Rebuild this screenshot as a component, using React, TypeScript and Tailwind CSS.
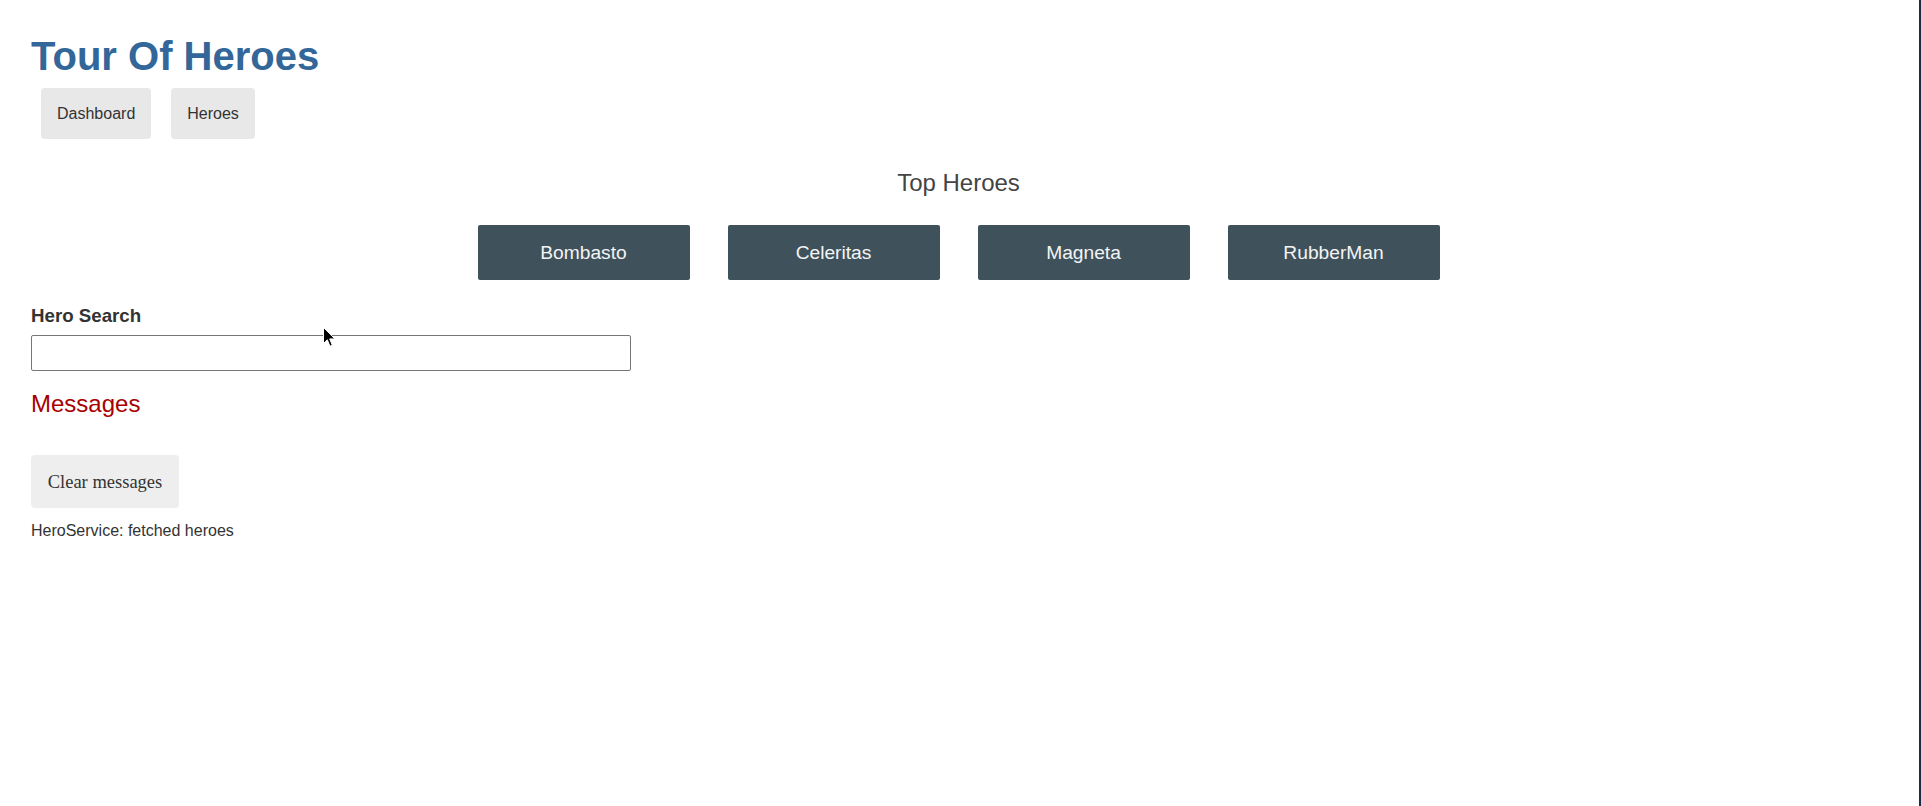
import React from "react";

const heroes = ["Bombasto", "Celeritas", "Magneta", "RubberMan"];

export default function App() {
  return (
    <div className="relative flex min-h-[806px] w-full bg-white">
      <main className="flex-1 pl-[31px] pr-[33px] pt-[33px] font-['Liberation_Sans',Arial,sans-serif] text-[#333]">
        <h1 className="text-[40px] font-bold leading-[46px] text-[#336699]">Tour Of Heroes</h1>
        <nav className="ml-[10px] mt-[9px] flex gap-5">
          <a className="block rounded-[4px] bg-[#e8e8e8] px-4 py-4 text-[16px] leading-[19px] text-[#333]">Dashboard</a>
          <a className="block rounded-[4px] bg-[#e8e8e8] px-4 py-4 text-[16px] leading-[19px] text-[#333]">Heroes</a>
        </nav>

        <h2 className="mt-[30px] text-center text-[24px] font-normal leading-[28px] text-[#444]">Top Heroes</h2>
        <div className="mx-auto mt-[28px] flex max-w-[1000px] justify-around">
          {heroes.map((h) => (
            <a
              key={h}
              className="flex h-[55px] w-[212px] items-center justify-center rounded-[2px] bg-[#3f525c] pt-[1px] text-[19.2px] leading-[22px] text-[#f4f4f4]"
            >
              {h}
            </a>
          ))}
        </div>

        <h4 className="mt-[25px] text-[18.72px] font-bold leading-[22px] text-[#333]">
          <label htmlFor="search-box">Hero Search</label>
        </h4>
        <input
          id="search-box"
          type="text"
          className="mt-[8px] block h-[36px] w-[600px] rounded-[2px] border border-[#767676] bg-white px-1 outline-none"
        />

        <h2 className="mt-[19px] text-[24px] font-normal leading-[28px] text-[#a80000]">Messages</h2>
        <button className="mt-[37px] flex h-[53px] w-[148px] items-center justify-center rounded-[4px] bg-[#eeeeee] pt-[2px] font-['Liberation_Serif','Times_New_Roman',serif] text-[18.5px] text-[#333]">
          Clear messages
        </button>
        <div className="mt-[14px] text-[16px] leading-[18px] text-[#333]">HeroService: fetched heroes</div>
      </main>
      <div className="w-[2px] shrink-0 bg-[#1f2a44]" />

      <svg
        className="pointer-events-none absolute left-[323px] top-[327px]"
        width="13"
        height="21"
        viewBox="0 0 13 21"
      >
        <path
          d="M0.5 0.5 L0.5 16.5 L4.3 12.8 L7 19.2 L9.3 18.2 L6.7 11.9 L11.8 11.9 Z"
          fill="#000"
          stroke="#fff"
          strokeWidth="1"
          strokeLinejoin="round"
        />
      </svg>
    </div>
  );
}
